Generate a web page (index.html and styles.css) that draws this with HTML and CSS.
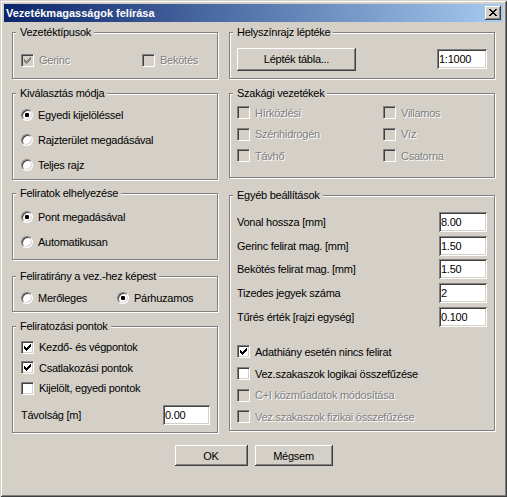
FILE: index.html
```html
<!DOCTYPE html>
<html>
<head>
<meta charset="utf-8">
<link rel="stylesheet" href="styles.css">
</head>
<body>
<div class="win">
  <div class="title">
    <span class="title-text">Vezetékmagasságok felírása</span>
    <span class="close"><svg width="8" height="7" viewBox="0 0 8 7" shape-rendering="crispEdges"><path fill="#000" d="M0 0h2v1H0zM6 0h2v1H6zM1 1h2v1H1zM5 1h2v1H5zM2 2h4v1H2zM3 3h2v1H3zM2 4h4v1H2zM1 5h2v1H1zM5 5h2v1H5zM0 6h2v1H0zM6 6h2v1H6z"/></svg></span>
  </div>
  <div class="content">
    <div class="col col-left">
      <div class="group g1">
        <span class="legend">Vezetéktípusok</span>
        <div class="row">
          <label class="item cell121 disabled"><span class="chk dis"><svg class="mark" width="7" height="7" viewBox="0 0 7 7" shape-rendering="crispEdges"><path d="M0 2h1v3H0zM1 3h1v3H1zM2 4h1v3H2zM3 3h1v3H3zM4 2h1v3H4zM5 1h1v3H5zM6 0h1v3H6z"/></svg></span>Gerinc</label>
          <label class="item disabled"><span class="chk dis"></span>Bekötés</label>
        </div>
      </div>
      <div class="group g2">
        <span class="legend">Kiválasztás módja</span>
        <div class="row r25"><label class="item"><span class="radio"><span class="dot"></span></span>Egyedi kijelöléssel</label></div>
        <div class="row r25"><label class="item"><span class="radio"></span>Rajzterület megadásával</label></div>
        <div class="row r25"><label class="item"><span class="radio"></span>Teljes rajz</label></div>
      </div>
      <div class="group g3">
        <span class="legend">Feliratok elhelyezése</span>
        <div class="row r25"><label class="item"><span class="radio"><span class="dot"></span></span>Pont megadásával</label></div>
        <div class="row r25"><label class="item"><span class="radio"></span>Automatikusan</label></div>
      </div>
      <div class="group g4">
        <span class="legend">Feliratirány a vez.-hez képest</span>
        <div class="row r20">
          <label class="item cell96"><span class="radio"></span>Merőleges</label>
          <label class="item"><span class="radio"><span class="dot"></span></span>Párhuzamos</label>
        </div>
      </div>
      <div class="group g5">
        <span class="legend">Feliratozási pontok</span>
        <div class="row r205"><label class="item"><span class="chk"><svg class="mark" width="7" height="7" viewBox="0 0 7 7" shape-rendering="crispEdges"><path d="M0 2h1v3H0zM1 3h1v3H1zM2 4h1v3H2zM3 3h1v3H3zM4 2h1v3H4zM5 1h1v3H5zM6 0h1v3H6z"/></svg></span>Kezdő- és végpontok</label></div>
        <div class="row r205"><label class="item"><span class="chk"><svg class="mark" width="7" height="7" viewBox="0 0 7 7" shape-rendering="crispEdges"><path d="M0 2h1v3H0zM1 3h1v3H1zM2 4h1v3H2zM3 3h1v3H3zM4 2h1v3H4zM5 1h1v3H5zM6 0h1v3H6z"/></svg></span>Csatlakozási pontok</label></div>
        <div class="row r205"><label class="item"><span class="chk"></span>Kijelölt, egyedi pontok</label></div>
        <div class="row field-row dist">
          <span class="field-label">Távolság [m]</span>
          <span class="edit w47">0.00</span>
        </div>
      </div>
    </div>
    <div class="col col-right">
      <div class="group r1">
        <span class="legend">Helyszínrajz léptéke</span>
        <div class="row field-row r24">
          <span class="btn scale-btn">Lépték tábla...</span>
          <span class="edit w50">1:1000</span>
        </div>
      </div>
      <div class="group r2">
        <span class="legend">Szakági vezetékek</span>
        <div class="row r215">
          <label class="item cell146 disabled"><span class="chk dis"></span>Hírközlési</label>
          <label class="item disabled"><span class="chk dis"></span>Villamos</label>
        </div>
        <div class="row r215">
          <label class="item cell146 disabled"><span class="chk dis"></span>Szénhidrogén</label>
          <label class="item disabled"><span class="chk dis"></span>Víz</label>
        </div>
        <div class="row r215">
          <label class="item cell146 disabled"><span class="chk dis"></span>Távhő</label>
          <label class="item disabled"><span class="chk dis"></span>Csatorna</label>
        </div>
      </div>
      <div class="group r3">
        <span class="legend">Egyéb beállítások</span>
        <div class="row field-row r2375"><span class="field-label">Vonal hossza [mm]</span><span class="edit w48">8.00</span></div>
        <div class="row field-row r2375"><span class="field-label">Gerinc felirat mag. [mm]</span><span class="edit w48">1.50</span></div>
        <div class="row field-row r2375"><span class="field-label">Bekötés felirat mag. [mm]</span><span class="edit w48">1.50</span></div>
        <div class="row field-row r2375"><span class="field-label">Tizedes jegyek száma</span><span class="edit w48">2</span></div>
        <div class="row field-row r2375"><span class="field-label">Tűrés érték [rajzi egység]</span><span class="edit w48">0.100</span></div>
        <div class="checks">
          <div class="row r2167"><label class="item"><span class="chk"><svg class="mark" width="7" height="7" viewBox="0 0 7 7" shape-rendering="crispEdges"><path d="M0 2h1v3H0zM1 3h1v3H1zM2 4h1v3H2zM3 3h1v3H3zM4 2h1v3H4zM5 1h1v3H5zM6 0h1v3H6z"/></svg></span>Adathiány esetén nincs felirat</label></div>
          <div class="row r2167"><label class="item"><span class="chk"></span>Vez.szakaszok logikai összefűzése</label></div>
          <div class="row r2167"><label class="item disabled"><span class="chk dis"></span>C+I közműadatok módosítása</label></div>
          <div class="row r2167"><label class="item disabled"><span class="chk dis"></span>Vez.szakaszok fizikai összefűzése</label></div>
        </div>
      </div>
    </div>
  </div>
  <div class="buttons">
    <span class="btn ok">OK</span>
    <span class="btn cancel">Mégsem</span>
  </div>
</div>
</body>
</html>
```

FILE: styles.css
```css
* { box-sizing: border-box; }
html, body { margin: 0; padding: 0; background: #d4d0c8; }
body {
  font-family: "Liberation Sans", Arial, sans-serif;
  font-size: 11px;
  letter-spacing: -0.25px;
  color: #000;
}
.win {
  width: 507px;
  height: 497px;
  padding: 4px;
  background: #d4d0c8;
  box-shadow: inset 1px 1px #d4d0c8, inset -1px -1px #404040, inset 2px 2px #fff, inset -2px -2px #808080;
}
.title {
  height: 18px;
  display: flex;
  align-items: center;
  justify-content: space-between;
  padding: 0 2px 0 2px;
  background: linear-gradient(to right, #0a246a, #a6caf0);
  color: #fff;
  font-weight: bold;
  font-size: 11px;
  letter-spacing: 0;
}
.close {
  width: 16px;
  height: 14px;
  background: #d4d0c8;
  box-shadow: inset -1px -1px #404040, inset 1px 1px #fff, inset -2px -2px #808080;
  display: flex;
  align-items: center;
  justify-content: center;
  padding-bottom: 1px;
  padding-right: 1px;
}
.close svg { display: block; }
.content {
  display: flex;
  gap: 11px;
  padding: 10px 0 0 8px;
}
.col { display: flex; flex-direction: column; }
.col-left { width: 206px; }
.col-right { width: 266px; }
.group {
  position: relative;
  border: 1px solid #808080;
  box-shadow: inset 1px 1px #fff, 1px 1px #fff;
  padding-left: 8px;
}
.col-right .group { padding-left: 7px; padding-right: 7px; }
.legend {
  position: absolute;
  left: 3px;
  top: -7px;
  line-height: 13px;
  padding: 0 3px 0 4px;
  background: #d4d0c8;
  white-space: nowrap;
}
.g1 { height: 47px; padding-top: 17px; }
.g2 { height: 87px; margin-top: 14px; padding-top: 8px; }
.g3 { height: 67px; margin-top: 13px; padding-top: 10px; }
.g4 { height: 36px; margin-top: 16px; padding-top: 11px; }
.g5 { height: 107px; margin-top: 14px; padding-top: 10px; padding-right: 7px; }
.r1 { height: 47px; padding-top: 14px; }
.r2 { height: 85px; margin-top: 14px; padding-top: 8px; }
.r3 { height: 236px; margin-top: 17px; padding-top: 14px; }

.row { display: flex; align-items: center; height: 20px; }
.r25 { height: 25px; }
.r20 { height: 20px; }
.r205 { height: 20.5px; }
.r24 { height: 24px; }
.r215 { height: 21.5px; }
.r2375 { height: 23.75px; }
.r2167 { height: 21.67px; }
.field-row { justify-content: space-between; }
.dist { height: 24px; margin-top: 4.5px; }
.checks { margin-top: 12.4px; }

.item { display: flex; align-items: center; gap: 5px; white-space: nowrap; }
.cell121 { width: 121px; }
.cell96 { width: 96px; }
.cell146 { width: 146px; }
.disabled { color: #808080; text-shadow: 1px 1px 0 #fff; }

.chk {
  flex: none;
  width: 13px;
  height: 13px;
  background: #fff;
  border: 1px solid;
  border-color: #808080 #fff #fff #808080;
  box-shadow: inset 1px 1px #404040, inset -1px -1px #d4d0c8;
  display: flex;
  align-items: center;
  justify-content: center;
}
.chk.dis { background: #d4d0c8; }
.mark { display: block; fill: #000; }
.chk.dis .mark { fill: #808080; }

.radio {
  flex: none;
  width: 12px;
  height: 12px;
  border-radius: 50%;
  background: #fff;
  border: 1px solid;
  border-color: #808080 #fff #fff #808080;
  box-shadow: inset 1px 1px #404040, inset -1px -1px #d4d0c8;
  display: flex;
  align-items: center;
  justify-content: center;
}
.dot { width: 4px; height: 4px; border-radius: 1px; background: #000; }

.edit {
  flex: none;
  height: 20px;
  background: #fff;
  box-shadow: inset 1px 1px #808080, inset -1px -1px #fff, inset 2px 2px #404040, inset -2px -2px #d4d0c8;
  padding: 0 0 0 2px;
  display: flex;
  align-items: center;
}
.w47 { width: 47px; }
.w48 { width: 48px; }
.w50 { width: 50px; }

.btn {
  display: flex;
  align-items: center;
  justify-content: center;
  background: #d4d0c8;
  box-shadow: inset -1px -1px #404040, inset 1px 1px #fff, inset -2px -2px #808080;
}
.scale-btn { width: 119px; height: 23px; }
.buttons {
  display: flex;
  justify-content: center;
  gap: 7px;
  margin-top: 12px;
}
.ok { width: 73px; height: 21px; }
.cancel { width: 78px; height: 21px; }
```
